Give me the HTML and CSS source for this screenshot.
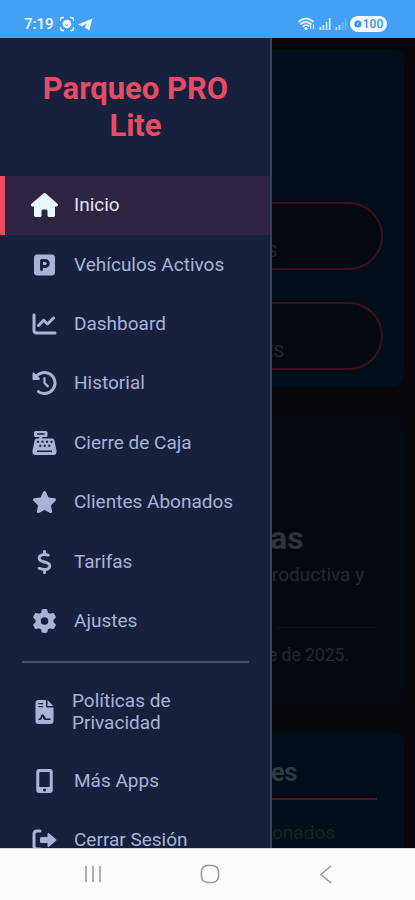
FILE: index.html
```html
<!DOCTYPE html>
<html lang="es">
<head>
<meta charset="utf-8">
<meta name="viewport" content="width=device-width, initial-scale=1">
<title>Parqueo PRO Lite</title>
<link rel="stylesheet" href="styles.css">
</head>
<body>
<div class="phone">
  <header class="status">
    <div class="status-left">
      <span class="time">7:19</span>
      <svg class="capture" viewBox="0 0 16 16"><path d="M1.5 5V3.500Q1.500 1.500 3.500 1.500H5M11 1.500h1.500q2 0 2 2V5M14.500 11v1.500q0 2-2 2H11M5 14.500H3.500q-2 0-2-2V11" fill="none" stroke="currentColor" stroke-width="1.300"/><circle cx="8" cy="8" r="4.300" fill="currentColor"/><path d="M6 8q1 2 3 1" stroke="#42a1f5" fill="none"/></svg>
      <svg class="plane" viewBox="0 0 16 14"><path d="M15.500.5 0 7l4.600 2L10 5.500 7 10l5 3.500z" fill="currentColor"/></svg>
    </div>
    <div class="status-right">
      <svg class="wifi" viewBox="0 0 18 14"><g fill="none" stroke="currentColor" stroke-width="1.700" stroke-linecap="round"><path d="M1 4.500q7-6 14 0M3 7q5-4 10 0M5.200 9.400q2.800-2.300 5.400-.4"/><path d="M12.500 11.500V8.500M15.500 8v3.500" stroke-width="1.300"/></g><circle cx="8" cy="11.500" r="1.600" fill="currentColor"/></svg>
      <svg class="signal" viewBox="0 0 12 12"><path d="M0 9h1.700v3H0zM3 7h1.700v5H3zM6.200 4h1.700v8H6.200zM9.300 0H11v12H9.300z" fill="currentColor"/></svg>
      <svg class="signal" viewBox="0 0 12 12"><path d="M0 9h1.700v3H0zM3 7h1.700v5H3z" fill="currentColor"/><path d="M6.200 4h1.700v8H6.200zM9.300 0H11v12H9.300z" fill="currentColor" opacity=".4"/></svg>
      <span class="battery"><svg viewBox="0 0 8 8"><circle cx="4" cy="4" r="3.600" fill="#3498e8"/><path d="M5 2.300Q3 3 3.500 5.500" fill="none" stroke="#d8edff"/></svg>100</span>
    </div>
  </header>

  <div class="screen">
    <main class="page">
      <section class="card actions">
        <div class="pill"><span>S</span></div>
        <div class="pill"><span>ES</span></div>
      </section>
      <section class="card info">
        <h2>as</h2>
        <p>roductiva y</p>
        <p class="date">e de 2025.</p>
      </section>
      <section class="card summary">
        <h3>es</h3>
        <p>onados</p>
      </section>
    </main>

    <aside class="drawer">
      <h1>Parqueo PRO Lite</h1>
      <nav>
        <a class="item active"><svg viewBox="0 0 576 512"><path d="M575.800 255.500c0 18-15 32.100-32 32.100h-32l.7 160.200c0 2.700-.2 5.400-.5 8.100V472c0 22.100-17.900 40-40 40H392c-22.100 0-40-17.900-40-40v-88c0-17.700-14.300-32-32-32h-64c-17.700 0-32 14.300-32 32v88c0 22.100-17.900 40-40 40h-80c-22.100 0-40-17.900-40-40V287.600H32c-18 0-32-14-32-32.100 0-9 3-17 10-24L266.400 8c7-7 15-8 22-8s15 2 21 7l255.400 224.500c8 7 12 15 11 24z"/></svg><span>Inicio</span></a>
        <a class="item"><svg viewBox="0 0 448 512"><path fill-rule="evenodd" d="M64 32C28.700 32 0 60.700 0 96V416c0 35.300 28.700 64 64 64H384c35.300 0 64-28.700 64-64V96c0-35.300-28.700-64-64-64H64zM192 256h48c17.700 0 32-14.300 32-32s-14.300-32-32-32H192v64zm48 64H192v32c0 17.700-14.300 32-32 32s-32-14.300-32-32V168c0-22.100 17.900-40 40-40h72c53 0 96 43 96 96s-43 96-96 96z"/></svg><span>Vehículos Activos</span></a>
        <a class="item"><svg viewBox="0 0 512 512"><path d="M64 64c0-17.700-14.300-32-32-32S0 46.300 0 64V400c0 44.200 35.800 80 80 80H480c17.700 0 32-14.300 32-32s-14.300-32-32-32H80c-8.800 0-16-7.200-16-16V64zm406.600 86.600c12.500-12.500 12.500-32.800 0-45.300s-32.800-12.500-45.300 0L320 210.700l-57.400-57.400c-12.500-12.500-32.800-12.500-45.300 0l-112 112c-12.500 12.500-12.500 32.800 0 45.300s32.800 12.500 45.300 0L240 221.300l57.400 57.400c12.500 12.500 32.800 12.500 45.300 0l128-128z"/></svg><span>Dashboard</span></a>
        <a class="item"><svg viewBox="0 0 512 512"><path d="M75 75L41 41C25.900 25.900 0 36.600 0 57.900V168c0 13.300 10.700 24 24 24H134.100c21.400 0 32.100-25.900 17-41l-30.800-30.800C155 85.500 203 64 256 64c106 0 192 86 192 192s-86 192-192 192c-40.800 0-78.600-12.700-109.700-34.400c-14.500-10.100-34.400-6.600-44.600 7.900s-6.600 34.400 7.900 44.600C151.200 495 201.700 512 256 512c141.400 0 256-114.600 256-256S397.400 0 256 0C185.300 0 121.300 28.700 75 75zm181 53c-13.300 0-24 10.700-24 24V256c0 6.400 2.500 12.500 7 17l72 72c9.400 9.400 24.600 9.400 33.900 0s9.400-24.600 0-33.900l-65-65V152c0-13.300-10.700-24-24-24z"/></svg><span>Historial</span></a>
        <a class="item"><svg viewBox="0 0 512 512"><path fill-rule="evenodd" d="M64 0H288Q320 0 320 32V96Q320 128 288 128H208V160H416Q462 160 468 205L500 370Q512 395 512 430V460Q512 512 460 512H52Q0 512 0 460V430Q0 395 12 370L44 205Q50 160 96 160H144V128H64Q32 128 32 96V32Q32 0 64 0ZM96 48V80H256V48ZM96 208v44h44v-44zM192 208v44h44v-44zM288 208v44h44v-44zM384 208v44h44v-44zM144 292v44h44v-44zM240 292v44h44v-44zM336 292v44h44v-44zM96 416V450H416V416Z"/></svg><span>Cierre de Caja</span></a>
        <a class="item"><svg viewBox="0 0 576 512"><path d="M316.900 18C311.600 7 300.400 0 288.100 0s-23.400 7-28.800 18L195 150.300 51.400 171.500c-12 1.800-22 10.200-25.700 21.700s-.7 24.200 7.900 32.700L137.800 329 113.200 474.700c-2 12 3 24.200 12.900 31.300s23 8 33.800 2.300l128.300-68.500 128.300 68.500c10.800 5.700 23.900 4.900 33.800-2.300s14.900-19.300 12.900-31.300L438.500 329 542.700 225.900c8.600-8.500 11.700-21.200 7.900-32.700s-13.700-19.900-25.700-21.700L381.200 150.300 316.900 18z"/></svg><span>Clientes Abonados</span></a>
        <a class="item"><svg viewBox="0 0 320 512"><path d="M160 0c17.700 0 32 14.300 32 32V67.700c1.600 .2 3.100 .4 4.700 .7c.4 .1 .7 .1 1.100 .2l48 8.800c17.400 3.200 28.900 19.900 25.700 37.200s-19.900 28.900-37.200 25.700l-47.500-8.700c-31.300-4.600-58.900-1.500-78.300 6.200s-27.200 18.300-29 28.100c-2 10.700-.5 16.700 1.200 20.400c1.800 3.900 5.500 8.300 12.800 13.200c16.300 10.700 41.300 17.700 73.700 26.300l2.900 .8c28.600 7.600 63.600 16.800 89.600 33.800c14.200 9.300 27.600 21.900 35.900 39.500c8.500 17.900 10.300 37.900 6.400 59.200c-6.900 38-33.100 63.400-65.600 76.700c-13.700 5.600-28.600 9.200-44.400 11V480c0 17.700-14.300 32-32 32s-32-14.300-32-32V445.100c-.4-.1-.9-.1-1.300-.2l-.2 0c-24.400-3.800-64.500-14.300-91.500-26.300c-16.100-7.200-23.400-26.100-16.200-42.200s26.100-23.400 42.200-16.200c20.900 9.300 55.300 18.500 75.200 21.600c31.900 4.700 58.200 2 76-5.300c16.900-6.900 24.600-16.900 26.800-28.900c1.900-10.600 .4-16.700-1.300-20.400c-1.900-4-5.600-8.400-13-13.300c-16.400-10.700-41.500-17.700-74-26.300l-2.800-.7C119.400 279.300 84.400 270 58.400 253c-14.200-9.300-27.500-22-35.800-39.600c-8.400-17.900-10.100-37.900-6.100-59.200C23.700 116 52.300 91.200 84.800 78.300c13.300-5.300 27.900-8.900 43.200-11V32c0-17.700 14.300-32 32-32z"/></svg><span>Tarifas</span></a>
        <a class="item"><svg viewBox="0 0 512 512"><path fill-rule="evenodd" d="M495.900 166.600c3.200 8.700 .5 18.400-6.400 24.600l-43.300 39.400c1.100 8.300 1.700 16.800 1.700 25.400s-.6 17.100-1.700 25.400l43.300 39.400c6.900 6.200 9.600 15.900 6.400 24.600c-4.400 11.900-9.700 23.300-15.800 34.300l-4.700 8.100c-6.600 11-14 21.400-22.100 31.200c-5.900 7.200-15.700 9.600-24.500 6.800l-55.700-17.700c-13.400 10.300-28.200 18.900-44 25.400l-12.500 57.100c-2 9.100-9 16.300-18.200 17.800c-13.800 2.300-28 3.500-42.500 3.500s-28.700-1.200-42.500-3.500c-9.200-1.500-16.200-8.700-18.200-17.800l-12.500-57.100c-15.800-6.500-30.600-15.100-44-25.400L83.100 425.900c-8.800 2.800-18.600 .3-24.500-6.800c-8.100-9.800-15.500-20.200-22.100-31.200l-4.700-8.100c-6.100-11-11.400-22.400-15.800-34.300c-3.200-8.700-.5-18.400 6.400-24.600l43.300-39.400C64.600 273.100 64 264.600 64 256s.6-17.100 1.700-25.400L22.400 191.200c-6.900-6.200-9.600-15.900-6.400-24.600c4.400-11.900 9.700-23.300 15.800-34.300l4.700-8.100c6.600-11 14-21.400 22.100-31.200c5.900-7.200 15.700-9.600 24.500-6.800l55.700 17.700c13.400-10.300 28.200-18.900 44-25.400l12.500-57.100c2-9.100 9-16.300 18.200-17.800C227.300 1.200 241.500 0 256 0s28.700 1.200 42.500 3.500c9.200 1.500 16.200 8.700 18.200 17.800l12.500 57.100c15.800 6.500 30.600 15.100 44 25.400l55.700-17.700c8.800-2.800 18.600-.3 24.500 6.800c8.100 9.800 15.500 20.200 22.100 31.200l4.700 8.100c6.100 11 11.400 22.400 15.800 34.300zM256 336a80 80 0 1 0 0-160 80 80 0 1 0 0 160z"/></svg><span>Ajustes</span></a>
        <hr>
        <a class="item tall"><svg viewBox="0 0 384 512"><path fill-rule="evenodd" d="M64 0H224V128Q224 160 256 160H384V448Q384 512 320 512H64Q0 512 0 448V64Q0 0 64 0ZM256 0 384 128H256ZM64 64V88H160V64ZM64 128V152H160V128ZM64 424H104Q124 424 130 404L148 350 174 408Q182 424 200 424H320V392H224L172 312Q144 288 122 326L96 392H64Z"/></svg><span>Políticas de<br>Privacidad</span></a>
        <a class="item"><svg viewBox="0 0 384 512"><path fill-rule="evenodd" d="M80 0H304Q368 0 368 64V448Q368 512 304 512H80Q16 512 16 448V64Q16 0 80 0ZM96 64Q80 64 80 80V368Q80 384 96 384H288Q304 384 304 368V80Q304 64 288 64ZM192 416a32 32 0 1 0 0 64 32 32 0 1 0 0-64z"/></svg><span>Más Apps</span></a>
        <a class="item"><svg viewBox="0 0 512 512"><path d="M160 64H96Q32 64 32 128V384Q32 448 96 448H160" fill="none" stroke="currentColor" stroke-width="64" stroke-linecap="round"/><path d="M192 192H320V128Q320 96 345 108L502 238Q522 256 502 274L345 404Q320 416 320 384V320H192Q160 320 160 288V224Q160 192 192 192Z"/></svg><span>Cerrar Sesión</span></a>
      </nav>
    </aside>
  </div>

  <footer class="navbar">
    <svg viewBox="0 0 24 24"><path d="M5 4v16M12 4v16M19 4v16"/></svg>
    <svg viewBox="0 0 24 24"><rect x="3.500" y="3.500" width="17" height="17" rx="6"/></svg>
    <svg viewBox="0 0 24 24"><path d="M17 4 7 12.500l10 8.500"/></svg>
  </footer>
</div>
</body>
</html>
```
FILE: styles.css
```css
* { box-sizing: border-box; }
body { margin: 0; font-family: Roboto, "Liberation Sans", sans-serif; }
h1, h2, h3, p { margin: 0; }

.phone { display: flex; flex-direction: column; width: 415px; height: 900px; overflow: hidden; background: #07070b; }

.status { display: flex; justify-content: space-between; flex: none; height: 38px; padding: 14px 28px 0 24px; background: #42a1f5; color: #f2f9ff; }
.status-left, .status-right { display: flex; align-items: center; height: 20px; }
.time { width: 30px; font: 500 15px/20px Roboto, sans-serif; margin-right: 5px; }
.capture { width: 16px; height: 16px; margin-right: 3px; }
.plane { width: 15px; height: 13px; }
.wifi { width: 18px; height: 14px; margin-right: 3px; opacity: .9; }
.signal { width: 13px; height: 12px; margin-right: 3px; opacity: .85; }
.signal + .signal { margin: 0 2px 0 0; opacity: .7; }
.battery { display: flex; align-items: center; justify-content: center; gap: 1px; width: 37px; height: 16px; border-radius: 8px; background: #f5fcff; color: #3c92df; font: 500 12px/16px Roboto, sans-serif; }
.battery svg { width: 8px; height: 8px; }

.screen { position: relative; flex: 1; overflow: hidden; }
.page { display: flex; flex-direction: column; gap: 29px; padding: 11px 11px 0 265px; }
.card { flex: none; border-radius: 0 12px 12px 0; }
.actions { display: flex; flex-direction: column; gap: 32px; height: 338px; padding: 153px 21px 0 0; background: #010e1a; }
.pill { flex: none; height: 68px; padding: 37px 0 0 2px; border: 2px solid #3e101d; border-left: 0; border-radius: 0 34px 34px 0; background: #04080f; color: #26292e; font-size: 17px; line-height: 20px; }
.pill + .pill { padding-left: 0; text-indent: -1px; }
.pill span { display: block; }
.info { height: 287px; padding: 104px 28px 0 5px; background: #040911; color: #24272e; }
.info h2 { margin-bottom: 7px; font-size: 32px; line-height: 36px; color: #303236; }
.info p { padding-left: 2px; font-size: 19px; line-height: 24px; white-space: nowrap; }
.info .date { margin: 40px 0 0 7px; padding: 15px 0 0; border-top: 1px solid #10151c; font-size: 17.500px; text-indent: -9px; }
.summary { height: 150px; padding: 25px 27px 0 6px; background: #010e1a; }
.summary h3 { height: 43px; border-bottom: 2px solid #541321; color: #303840; font-size: 25px; line-height: 32px; }
.summary p { padding: 21px 0 0 1px; color: #092918; font-size: 19px; line-height: 24px; }

.drawer { position: absolute; top: 0; bottom: 0; left: 0; width: 272px; overflow: hidden; border-right: 2px solid #34435c; background: #17213e; }
.drawer h1 { padding: 31.500px 39px 32px 40px; color: #e94b65; font-size: 31px; line-height: 37px; text-align: center; }
.item { display: flex; align-items: center; gap: 17px; height: 59.400px; padding-left: 27px; border-left: 5px solid transparent; color: #a9b3d6; font-size: 19px; line-height: 22px; white-space: nowrap; }
.item svg { flex: none; width: 25px; height: 24px; fill: currentColor; }
.item.active { border-left-color: #e94b65; background: #2f2440; color: #dfe5f4; }
.item.active svg { width: 27px; margin: 0 -1px; color: #e8f8ff; }
.item.tall { height: 79px; gap: 15px; }
hr { height: 2px; margin: 10.500px 21px 9px 22px; border: 0; background: #43516d; }

.navbar { display: flex; justify-content: space-between; flex: none; height: 52px; padding: 13px 77px 0 81px; background: #fbfbfb; border-top: 1px solid #d5d5d8; }
.navbar svg { width: 24px; height: 24px; fill: none; stroke: #999; stroke-width: 1.600; }
```
